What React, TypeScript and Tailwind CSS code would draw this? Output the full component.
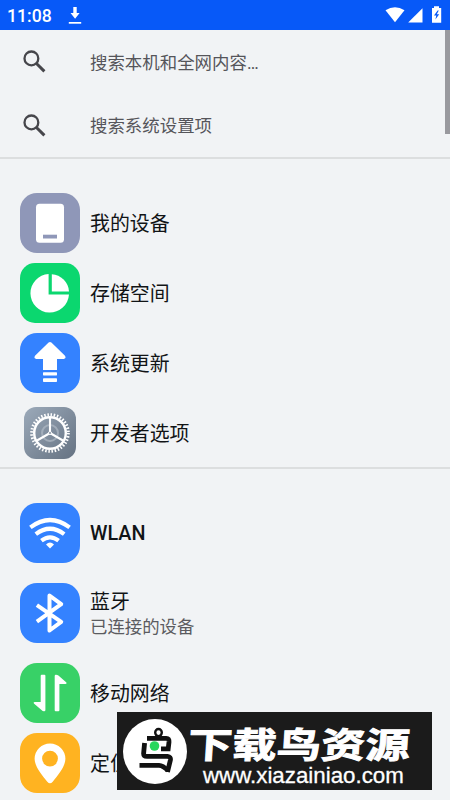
import React from "react";

interface SettingItem {
    title: string;
    subtitle?: string;
    color: string;
    icon: React.ReactNode;
}

const SearchIcon = () => (
    <svg viewBox="0 0 24 24" fill="none" stroke="#46464b" className="size-6">
        <circle cx="9.4" cy="8.4" r="6.9" strokeWidth="2.3" />
        <path d="M14.2 13.2 22.4 21.4" strokeWidth="3" />
    </svg>
);

const PhoneIcon = () => (
    <svg viewBox="0 0 60 60" className="size-full">
        <rect x="16" y="10.7" width="28" height="39" rx="3.5" fill="#fff" />
        <rect x="23" y="41.7" width="14" height="3.8" fill="#8f97b8" />
    </svg>
);

const StorageIcon = () => (
    <svg viewBox="0 0 60 60" fill="#fff" className="size-full">
        <path d="M28.6 11A19.3 19.3 0 1 0 49 31.6H28.6Z" />
        <path d="M31.8 11.2A18.6 18.6 0 0 1 49 28.4H31.8Z" />
    </svg>
);

const UpdateIcon = () => (
    <svg viewBox="0 0 60 60" fill="#fff" className="size-full">
        <path d="M28.6 9.6Q30 8.4 31.4 9.6L45 22.8Q46.6 25.6 43.6 26H37V37H23V26H16.4Q13.4 25.6 15 22.8Z" />
        <rect x="23" y="39.2" width="14" height="3.2" rx=".6" />
        <rect x="23" y="45.3" width="14" height="3.8" rx=".8" />
    </svg>
);

const GearIcon = () => (
    <svg viewBox="0 0 52 52" fill="none" stroke="#fff" className="size-full">
        <circle cx="26" cy="26" r="8" stroke="#b3bdc8" strokeWidth="2" opacity=".65" />
        <circle cx="26" cy="26" r="15.8" strokeWidth="2.4" />
        <circle cx="26" cy="26" r="18.3" strokeWidth="3" strokeDasharray="1.5 1.694" />
        <path d="M26 26V10M26 26 12.2 34M26 26 39.8 34" strokeWidth="2.1" />
        <circle cx="26" cy="26" r="1.5" fill="#7f8c9b" strokeWidth="1" />
    </svg>
);

const WlanIcon = () => (
    <svg viewBox="0 0 60 60" fill="none" stroke="#fff" strokeWidth="4.2" className="size-full">
        <path d="M10.4 24.4Q30 9.6 49.6 24.4" />
        <path d="M15.8 31.2Q30 20.3 44.2 31.2" />
        <path d="M21.4 37.7Q30 31 38.6 37.7" />
        <path d="M26 41.5Q30 37.7 34 41.5L30 45.5Z" fill="#fff" stroke="none" />
    </svg>
);

const BluetoothIcon = () => (
    <svg viewBox="0 0 60 60" fill="none" stroke="#fff" strokeWidth="4" strokeLinejoin="round" className="size-full">
        <path d="M16.9 22.2 41.2 38.8 29.5 47.5V12.5L41.2 21.2 16.9 38.6" />
    </svg>
);

const NetworkIcon = () => (
    <svg viewBox="0 0 60 60" fill="#fff" className="size-full">
        <path d="M20.7 12.7Q20.7 11.7 21.7 11.7H24.4Q25.4 11.7 25.4 12.7V47Q25.4 48.4 23.8 48.2 22.7 48.2 21.5 47L13.9 40.6Q13 39.1 14.6 39H20.7Z" />
        <path d="M34.7 13Q34.7 11.6 36 11.7 37.3 11.7 38.4 12.6L46.4 19.6Q47.2 21 45.5 21.1H39.4V47.2Q39.4 48.2 38.4 48.2H35.7Q34.7 48.2 34.7 47.2Z" />
    </svg>
);

const LocationIcon = () => (
    <svg viewBox="0 0 60 60" fill="#fff" fillRule="evenodd" className="size-full">
        <path d="M30 10.4A15.4 15.4 0 0 0 14.6 25.8C14.6 33.5 22 42 27.3 48.7Q30 51.7 32.7 48.7C38 42 45.4 33.5 45.4 25.8A15.4 15.4 0 0 0 30 10.4ZM30 17.7A7.9 7.9 0 1 1 30 33.5 7.9 7.9 0 0 1 30 17.7Z" />
    </svg>
);

const deviceItems: SettingItem[] = [
    { title: "我的设备", color: "size-[60px] rounded-[17px] bg-[#8f97b8]", icon: <PhoneIcon /> },
    { title: "存储空间", color: "size-[60px] rounded-[15px] bg-[#0bd76f]", icon: <StorageIcon /> },
    { title: "系统更新", color: "size-[60px] rounded-[17px] bg-[#3482ff]", icon: <UpdateIcon /> },
    { title: "开发者选项", color: "size-[52px] rounded-[12px] bg-linear-to-br from-[#9caaba] to-[#657282]", icon: <GearIcon /> },
];

const networkItems: SettingItem[] = [
    { title: "WLAN", color: "size-[60px] rounded-[17px] bg-[#3482ff]", icon: <WlanIcon /> },
    { title: "蓝牙", subtitle: "已连接的设备", color: "size-[60px] rounded-[17px] bg-[#3482ff]", icon: <BluetoothIcon /> },
    { title: "移动网络", color: "size-[60px] rounded-[17px] bg-[#38d167]", icon: <NetworkIcon /> },
    { title: "定位", color: "size-[60px] rounded-[17px] bg-[#ffb321]", icon: <LocationIcon /> },
];

const SearchRow = ({ text }: { text: string }) => (
    <div className="flex h-[63.5px] items-center">
        <div className="ml-[22px] w-[68px]">
            <SearchIcon />
        </div>
        <span className="pt-[1px] text-[17.45px] leading-6 text-[#55555a]">{text}</span>
    </div>
);

const SettingRow = ({ item }: { item: SettingItem }) => (
    <div className={item.subtitle ? "flex h-[90px] items-center pl-5" : "flex h-[70px] items-center pl-5"}>
        <div className="flex w-[60px] shrink-0 justify-center">
            <div className={item.color}>{item.icon}</div>
        </div>
        <div className={item.title === "WLAN" ? "ml-[10px] flex flex-col pt-[3px]" : "ml-[10px] flex flex-col pt-[4px]"}>
            <span className={item.title === "WLAN" ? "text-[19.8px] leading-[26px] font-medium text-[#111416]" : "text-[19.9px] leading-[26px] text-[#111416]"}>
                {item.title}
            </span>
            {item.subtitle && <span className="text-[17.4px] leading-[23px] text-[#5b5b60]">{item.subtitle}</span>}
        </div>
    </div>
);

const StatusBar = () => (
    <div className="flex h-[30px] items-center bg-[#0759f8] text-white">
        <span className="ml-[7px] w-[60px] pt-[1px] font-[Roboto] text-[17.6px] leading-[30px] font-medium">11:08</span>
        <svg viewBox="0 0 14 18" fill="#fff" className="ml-[1px] h-[18px] w-[14px]">
            <path d="M5.3 1H8.7V7H11.6L7.1 12.8 2.5 7H5.3Z" />
            <rect x=".8" y="16" width="12.4" height="1.7" />
        </svg>
        <svg viewBox="0 0 60 20" fill="#fff" className="mr-[8px] ml-auto h-5 w-[60px]">
            <path d="M3.5 5.3Q13 -1 22.5 5.3L13 17.3Z" />
            <path d="M40.5 3.2V17.6H26.2Z" />
            <path fillRule="evenodd" d="M52 1.3H57V3H59.2V17.7H50V3H52ZM55.6 5.5 52 10.5H54.3L53.4 14.5 57.2 9.3H54.8L56.8 5.5Z" />
        </svg>
    </div>
);

const Banner = () => (
    <div className="absolute top-[712px] left-[117px] flex h-[78px] w-[315px] items-center bg-[#1b1b1b] text-white">
        <svg viewBox="0 0 64 65" className="ml-[6px] h-[65px] w-16 shrink-0">
            <ellipse cx="32" cy="32.5" rx="32" ry="32.5" fill="#fff" />
            <g fill="none" stroke="#111" strokeWidth="4.8">
                <ellipse cx="35.5" cy="13.6" rx="3.3" ry="3.6" strokeWidth="2.4" />
                <path d="M24 19.4H43.3Q46.3 19.4 46 23L45.2 29.8H38" />
                <path d="M21.6 24L20.6 34.5Q20.6 37.4 24 37.4H44.5Q48 37.8 47.4 41L44.5 53" />
                <path d="M16.5 46.3H36Q40 46.5 45 51.5" />
            </g>
            <circle cx="31.5" cy="27" r="4.8" fill="#27d65c" />
        </svg>
        <div className="flex w-[226px] flex-col pt-[12px]">
            <span className="ml-[1px] origin-left -skew-x-3 scale-x-[1.25] text-[35.5px] leading-[36px] font-bold whitespace-nowrap [-webkit-text-stroke:0.9px_white]">下载鸟资源</span>
            <span className="ml-[16px] font-['Liberation_Sans'] text-[22.3px] leading-[23px] whitespace-nowrap [-webkit-text-stroke:0.3px_white]">www.xiazainiao.com</span>
        </div>
    </div>
);

const App: React.FC = () => {
    return (
        <div className="relative h-[800px] w-[450px] overflow-hidden bg-[#f1f3f5] font-[Roboto,'Noto_Sans_CJK_SC',sans-serif]">
            <StatusBar />
            <div className="h-[129px] border-b-2 border-[#dcdedf] pt-[0.6px]">
                <SearchRow text="搜索本机和全网内容…" />
                <SearchRow text="搜索系统设置项" />
            </div>
            <div className="h-[310px] border-b-2 border-[#dcdedf] pt-[28.5px]">
                {deviceItems.map((item) => (
                    <SettingRow key={item.title} item={item} />
                ))}
            </div>
            <div className="pt-[28.5px]">
                {networkItems.map((item) => (
                    <SettingRow key={item.title} item={item} />
                ))}
            </div>
            <div className="absolute top-[30px] right-0 h-[104px] w-[5px] bg-[#99999e]" />
            <Banner />
        </div>
    );
};

export default App;
